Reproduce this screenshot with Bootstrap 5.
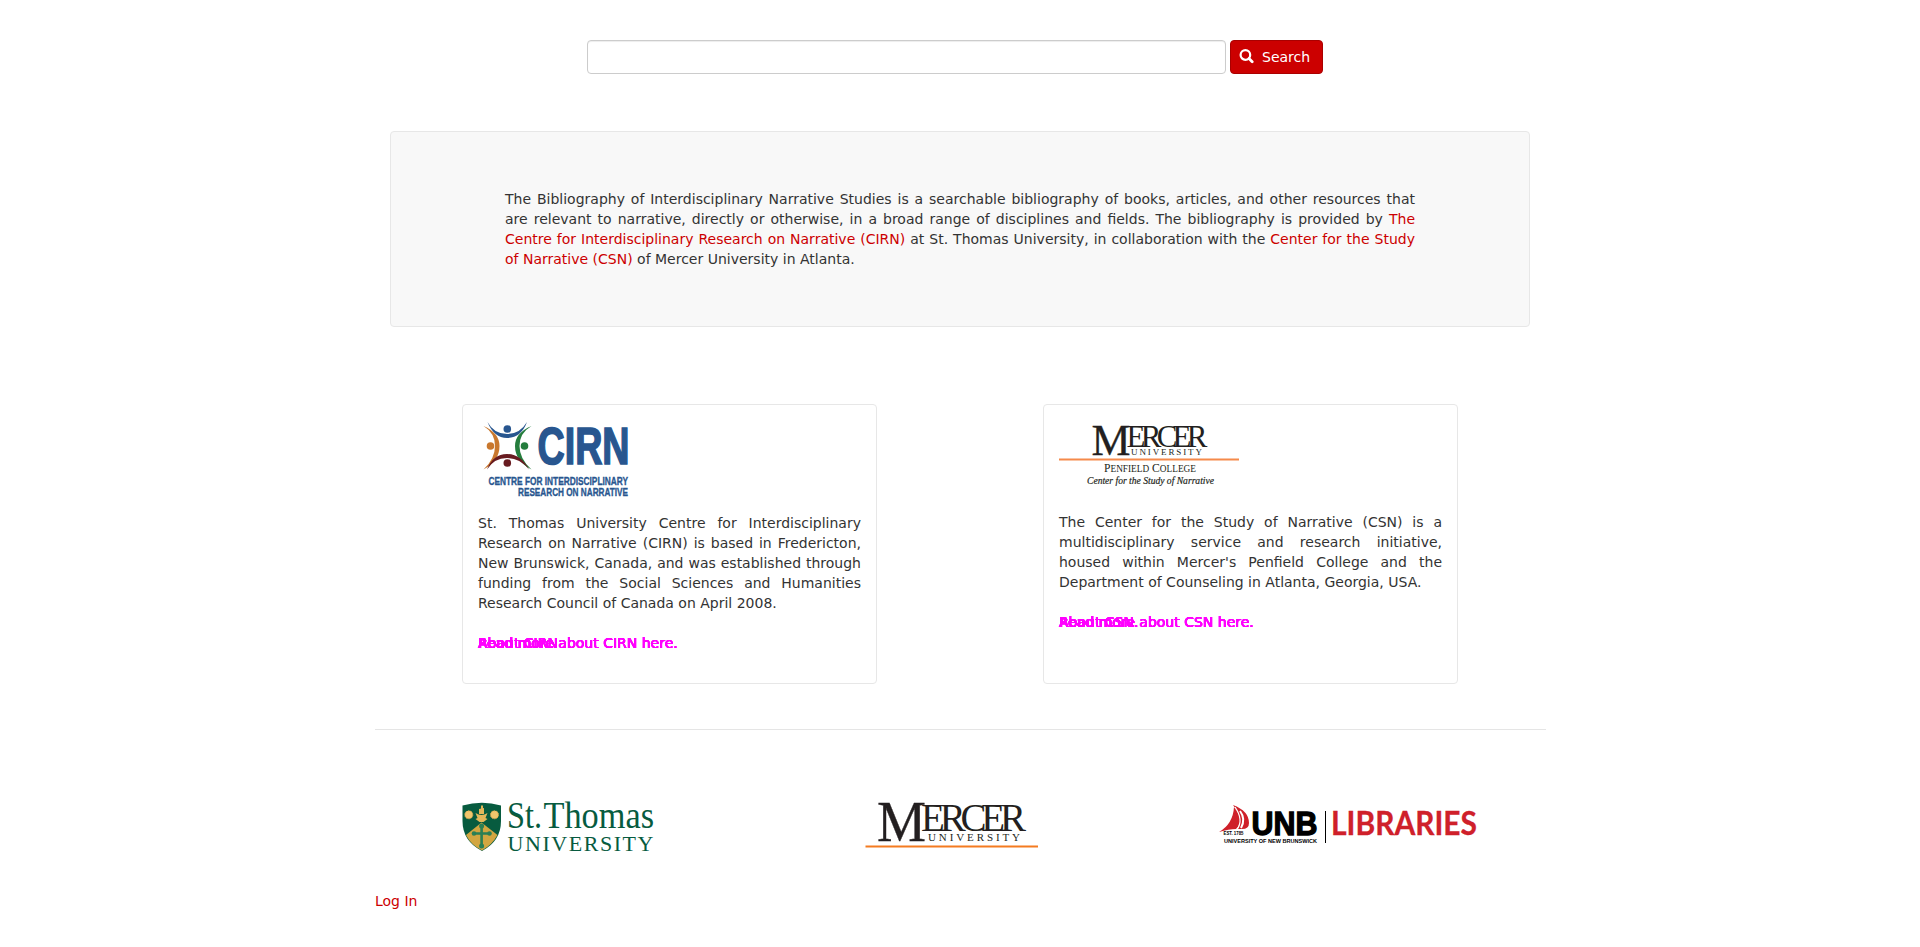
<!DOCTYPE html>
<html lang="en">
<head>
<meta charset="utf-8">
<title>Bibliography of Interdisciplinary Narrative Studies</title>
<link href="https://cdn.jsdelivr.net/npm/bootstrap@5.3.0/dist/css/bootstrap.min.css" rel="stylesheet">
<style>
body{font:14px/20px "DejaVu Sans",sans-serif;color:#333}
a{color:#c00;text-decoration:none}
.container.page{width:1170px;max-width:1170px;padding-left:0;padding-right:0}
.search-row{padding:40px 0 57px 212px;gap:4px}
.search-row .form-control{width:639px;height:34px;font-size:14px;border-color:#ccc;border-radius:4px;box-shadow:inset 0 1px 1px rgba(0,0,0,.075)}
.btn-search{width:93px;height:34px;background:#c00;border:1px solid #a00;border-radius:4px;color:#fff;font-size:14px;line-height:20px;padding:6px 8px}
.btn-search svg{margin-right:8px;flex:none;position:relative;top:-1px}
.intro{margin:0 15px;height:196px;background:#f8f8f8;border:1px solid #e7e7e7;border-radius:4px;padding:57px 114px;text-align:justify}
.partner{width:415px;height:280px;border:1px solid #e7e7e7;border-radius:4px;padding:15px;text-align:justify}
.partners{padding:77px 87px 45px}
.partner-logo{display:block;height:93px;overflow:visible}
.partner-logo.short{height:92px}
.more{display:grid;height:20px;margin-top:20px}
.more a{grid-area:1/1;color:#f0f;text-shadow:0 0 0 #f0f,0 0 0 #f0f,0 0 0 #f0f,0 0 0 #f0f,0 0 0 #f0f,0 0 0 #f0f}
.divider{border-top:1px solid #e5e5e5;margin-right:-1px}
.sponsors{padding:60px 0 0 87px;height:161px}
.sponsors svg{flex:none;overflow:visible}
.sponsor-mercer{margin-left:208px;margin-right:179px}
</style>
</head>
<body>
<div class="container page">
  <form class="d-flex search-row">
    <input class="form-control" type="text" aria-label="Search">
    <button class="btn btn-search d-flex align-items-center" type="button">
      <svg width="15" height="15" viewBox="0 0 15 15" fill="none" stroke="#fff"><circle cx="6.400" cy="6" r="4.800" stroke-width="2.200"/><path d="M10 9.600 13.200 12.800" stroke-width="2.800" stroke-linecap="round"/></svg>Search</button>
  </form>
  <section class="intro">The Bibliography of Interdisciplinary Narrative Studies is a searchable bibliography of books, articles, and other resources that are relevant to narrative, directly or otherwise, in a broad range of disciplines and fields. The bibliography is provided by <a href="#">The Centre for Interdisciplinary Research on Narrative (CIRN)</a> at St. Thomas University, in collaboration with the <a href="#">Center for the Study of Narrative (CSN)</a> of Mercer University in Atlanta.</section>

  <section class="partners d-flex justify-content-between">
    <article class="partner">
      <svg class="partner-logo" width="170" height="93" viewBox="478 420 170 93">
        <path d="M487.500 422Q494 434 507 434Q520 434 527 422Q521 438 507 438Q494 438 487.500 422Z" fill="#28568f"/>
        <path d="M483.500 426Q495 433 495 446Q495 459 483.500 469.500Q499.500 461 499.500 446Q499.500 433 483.500 426Z" fill="#c9782e"/>
        <path d="M531.500 426Q519.500 433 519.500 446Q519.500 459 531.500 469.500Q515 461 515 446Q515 433 531.500 426Z" fill="#257d3d"/>
        <path d="M487 469.500Q493 454 507 454Q521 454 529 469.500Q520 458 507 458Q494 458 487 469.500Z" fill="#681b20"/>
        <circle cx="507.300" cy="429" r="3.800" fill="#28568f"/><circle cx="490.500" cy="446" r="3.800" fill="#c9782e"/><circle cx="524.500" cy="446" r="3.800" fill="#257d3d"/><circle cx="507.300" cy="463" r="3.800" fill="#681b20"/>
        <g fill="#28568f" stroke="#28568f" font-family="Liberation Sans Narrow,Liberation Sans,sans-serif" font-weight="700">
          <text x="537.500" y="463.500" font-size="51" stroke-width="1.600" textLength="92" lengthAdjust="spacingAndGlyphs">CIRN</text>
          <text x="488.500" y="484.500" font-size="11.500" stroke-width=".35" textLength="139.500" lengthAdjust="spacingAndGlyphs">CENTRE FOR INTERDISCIPLINARY</text>
          <text x="518" y="495.500" font-size="11.500" stroke-width=".35" textLength="110" lengthAdjust="spacingAndGlyphs">RESEARCH ON NARRATIVE</text>
        </g>
      </svg>
      <div>St. Thomas University Centre for Interdisciplinary Research on Narrative (CIRN) is based in Fredericton, New Brunswick, Canada, and was established through funding from the Social Sciences and Humanities Research Council of Canada on April 2008.</div>
      <div class="more"><a href="#">Read more about CIRN here.</a><a href="#">About CIRN</a><a href="#">Read more</a></div>
    </article>
    <article class="partner">
      <svg class="partner-logo short" width="182" height="92" viewBox="1059 420 182 92">
        <g fill="#231f20" font-family="Liberation Serif,serif">
          <text x="1091.500" y="455" font-size="45" stroke="#231f20" stroke-width=".3" textLength="39" lengthAdjust="spacingAndGlyphs">M</text>
          <text x="1126.500" y="447" font-size="31" textLength="81">ERCER</text>
          <text x="1131" y="455" font-size="9" textLength="71">UNIVERSITY</text>
          <text x="1104" y="472" font-size="12.500" textLength="92" lengthAdjust="spacingAndGlyphs">P<tspan font-size="10">ENFIELD</tspan> C<tspan font-size="10">OLLEGE</tspan></text>
          <text x="1087" y="484" font-size="10.500" font-style="italic" stroke="#231f20" stroke-width=".2" textLength="127" lengthAdjust="spacingAndGlyphs">Center for the Study of Narrative</text>
        </g>
        <path d="M1059 459.500h180" stroke="#f58a4b" stroke-width="2"/>
      </svg>
      <div>The Center for the Study of Narrative (CSN) is a multidisciplinary service and research initiative, housed within Mercer's Penfield College and the Department of Counseling in Atlanta, Georgia, USA.</div>
      <div class="more"><a href="#">Read more about CSN here.</a><a href="#">About CSN.</a><a href="#">Read more</a></div>
    </article>
  </section>

  <div class="divider"></div>
  <footer>
    <div class="sponsors d-flex align-items-start">
      <svg width="195" height="70" viewBox="462 790 195 70">
        <path d="M462.500 805.500Q482 800 501 805.500V821Q501 841 482 851Q462.500 841 462.500 821Z" fill="#075b3f"/>
        <path d="M466 835 481.500 822.500 497.500 835Q492 845 482 850.500Q471 845 466 835Z" fill="#d2a641"/>
        <g fill="#f2c66d" stroke="#d7a44a" stroke-dasharray="1.500 1"><circle cx="468.800" cy="814.800" r="4"/><circle cx="494.500" cy="814.800" r="4"/></g>
        <path d="M475.500 813q6 4 12 0l-2 5 2 1-4 3h-4l-4-3 2-1zM479 809l5-1v6h-5zM481 805.500h2v3h-2z" fill="#e3b75a"/>
        <path d="M481.600 826v20M473.500 833.500h16.500" stroke="#2b7f55" stroke-width="2.600"/>
        <g fill="#2b7f55"><circle cx="481.600" cy="826" r="2.500"/><circle cx="481.600" cy="846" r="2.500"/><circle cx="474" cy="833.500" r="2.300"/><circle cx="489.500" cy="833.500" r="2.300"/></g>
        <g fill="#075b3f" font-family="Liberation Serif,serif">
          <text x="507" y="828" font-size="38" textLength="35" lengthAdjust="spacingAndGlyphs">St.</text>
          <text x="543.500" y="828" font-size="38" textLength="110.500" lengthAdjust="spacingAndGlyphs">Thomas</text>
          <text x="507.500" y="850.500" font-size="22" textLength="146">UNIVERSITY</text>
        </g>
      </svg>
      <svg class="sponsor-mercer" width="174" height="70" viewBox="865 790 174 70">
        <g fill="#231f20" font-family="Liberation Serif,serif">
          <text x="877" y="841" font-size="58" stroke="#231f20" stroke-width=".3" textLength="49" lengthAdjust="spacingAndGlyphs">M</text>
          <text x="921" y="831" font-size="39" textLength="105">ERCER</text>
          <text x="928" y="841" font-size="11" textLength="92">UNIVERSITY</text>
        </g>
        <path d="M865.500 846.500H1038" stroke="#f47b20" stroke-width="2"/>
      </svg>
      <svg width="260" height="70" viewBox="1218 790 260 70">
        <path d="M1233 805Q1249 811 1249 823Q1249 829 1242 829H1238Q1243 818 1233 805Z" fill="#cf202a"/>
        <path d="M1234 807Q1245 821 1236 829Q1229 829 1219 832Q1233 824 1234 807Z" fill="#cf202a"/>
        <path d="M1235 807Q1244 820 1237 829.500" fill="none" stroke="#fff" stroke-width="1.200"/>
        <path d="M1240 811Q1246 819 1241 828" fill="none" stroke="#fff" stroke-width="2"/>
        <g font-family="Liberation Sans,sans-serif" font-weight="700">
          <text x="1251.500" y="834.500" font-size="33" stroke="#000" stroke-width="1.300" textLength="66" lengthAdjust="spacingAndGlyphs">UNB</text>
          <text x="1223.500" y="835" font-size="4.800" textLength="20" lengthAdjust="spacingAndGlyphs">EST. 1785</text>
          <text x="1224" y="842.500" font-size="5.500" textLength="93" lengthAdjust="spacingAndGlyphs">UNIVERSITY OF NEW BRUNSWICK</text>
          <text x="1331" y="834.500" font-size="32.500" font-family="Lato,sans-serif" fill="#cf202a" stroke="#cf202a" stroke-width=".3" textLength="146" lengthAdjust="spacingAndGlyphs">LIBRARIES</text>
        </g>
        <path d="M1325.500 811v32" stroke="#000"/>
      </svg>
    </div>
    <a href="#">Log In</a>
  </footer>
</div>
<script src="https://cdn.jsdelivr.net/npm/bootstrap@5.3.0/dist/js/bootstrap.bundle.min.js"></script>
</body>
</html>
